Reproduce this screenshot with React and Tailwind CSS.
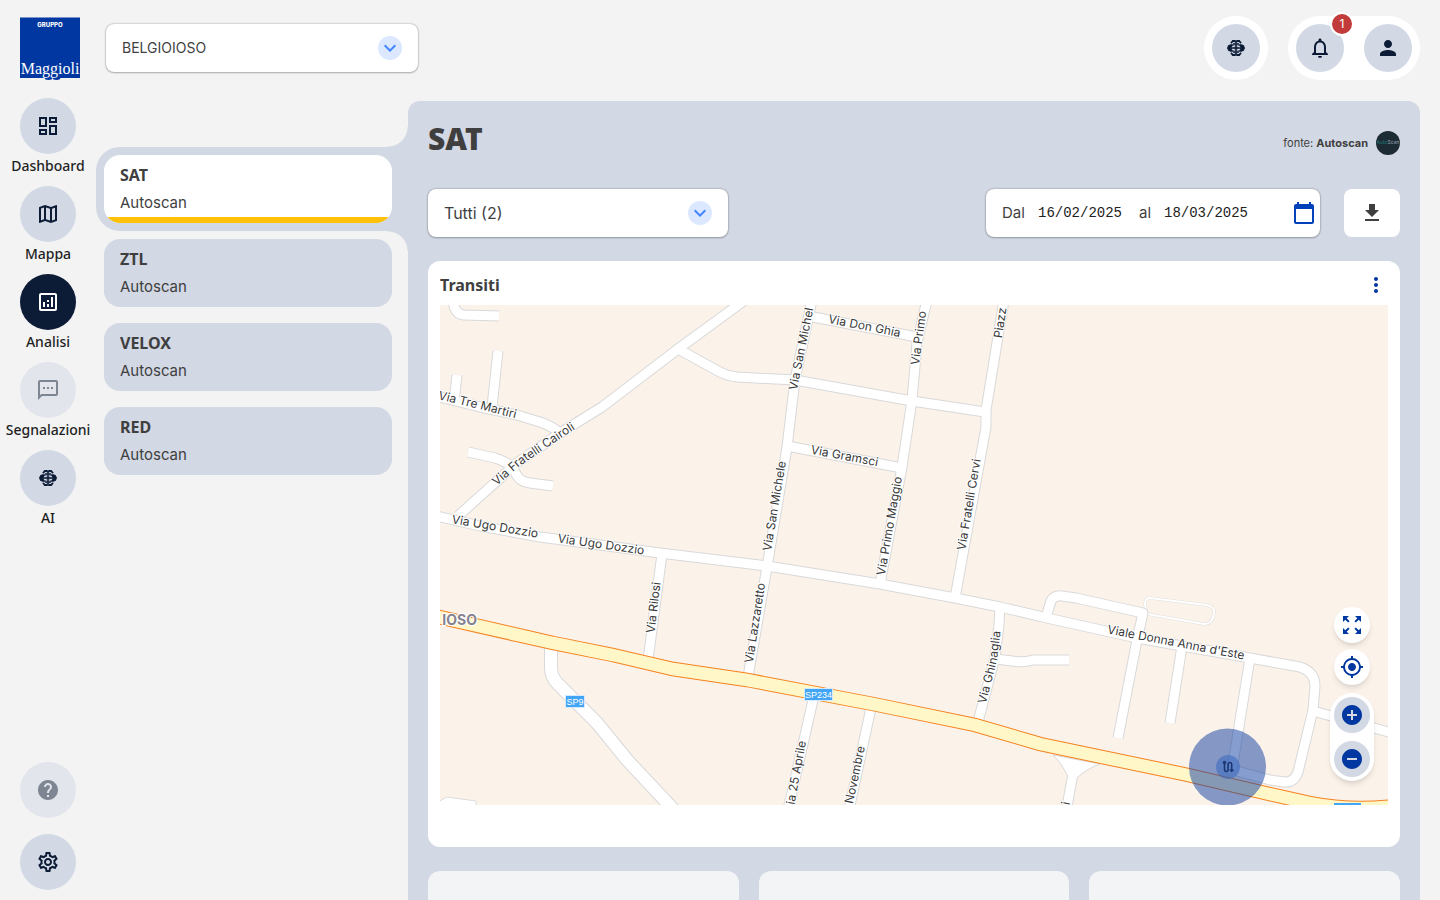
import {
    MdOutlineDashboard,
    MdOutlineMap,
    MdOutlineAnalytics,
    MdOutlineSms,
    MdHelp,
    MdOutlineSettings,
    MdNotificationsNone,
    MdPerson,
    MdFileDownload,
    MdCalendarToday,
    MdMoreVert,
    MdZoomOutMap,
    MdMyLocation,
    MdAddCircle,
    MdRemoveCircle,
    MdExpandMore,
} from "react-icons/md";

const BrainIcon = ({ className }) => (
    <svg viewBox="0 0 24 24" className={className} fill="none" stroke="currentColor" strokeWidth="1.800" aria-hidden="true">
        <path d="M11.600 5H8.800L7 7.200M12.400 5h2.800L17 7.200M11.600 19H8.800L7 16.800M12.400 19h2.800l1.800-2.200" />
        <path d="M3 12l1.200-2.800L6.500 8.200h2.300L10.300 9.500H8.800L7.500 11.500h1.800L11 12.300H9.300L7.500 13l1.300 1.500h1.500L8.800 15.800H6.500l-2.300-1z" fill="currentColor" stroke="none" />
        <path d="M21 12l-1.200-2.800-2.300-1h-2.300l-1.500 1.300h1.500l1.300 2h-1.800L13 12.300h1.700l1.800.7-1.300 1.500h-1.500l1.500 1.300h2.300l2.300-1z" fill="currentColor" stroke="none" />
        <path d="M11.300 4.500v15M12.700 4.500v15" strokeWidth="1" />
        <path d="M8.500 12h7" strokeWidth="1.500" />
        <path d="M9 8h2.500M12.500 8H15M9 16h2.500M12.500 16H15" strokeWidth="1.300" />
    </svg>
);

const MENU = [
    { label: "Dashboard", icon: MdOutlineDashboard },
    { label: "Mappa", icon: MdOutlineMap },
    { label: "Analisi", icon: MdOutlineAnalytics, active: true },
    { label: "Segnalazioni", icon: MdOutlineSms, disabled: true },
    { label: "AI", icon: BrainIcon },
];

const SECTIONS = [
    { title: "SAT", source: "Autoscan", active: true },
    { title: "ZTL", source: "Autoscan" },
    { title: "VELOX", source: "Autoscan" },
    { title: "RED", source: "Autoscan" },
];

const ROADS = [
    "M745 300L678 349L602 407L560 433L517 463L458 516",
    "M678 349L718 371Q727 376 737 377L795 380L912 401L985 412",
    "M436 396L480 407L517 415L543 423Q551 426 559 432",
    "M457 375L454 402",
    "M498 351L492 407",
    "M468 452L495 458Q512 463 516 474Q520 482 530 483L553 486",
    "M453 300Q454 314 464 315L499 316",
    "M436 516L480 526L540 537L660 553L767 566L880 584L955 598L1000 607L1047 618L1137 638L1182 646L1250 658L1300 667Q1315 672 1315 686L1313 710L1298 772Q1294 783 1284 782L1270 780L1237 771",
    "M812 300L795 380L787 447L767 567L748 677",
    "M813 317L917 337",
    "M927 300L917 343L912 400L902 467L880 584",
    "M787 446L902 468",
    "M1004 300L986 410L986 427L955 598",
    "M662 554L648 660",
    "M1000 607L999 625L995 657L978 722",
    "M996 659L1012 661Q1023 663 1033 660L1069 660",
    "M1046 617L1051 601Q1054 595 1062 596L1076 598L1143 613L1137 640L1118 738",
    "M1182 646L1170 723",
    "M1250 658L1232 770",
    "M1313 711L1392 733",
    "M813 700L788 810",
    "M871 708L849 810",
    "M1074 768L1066 812",
];

const SP9 = "M551 644L551 668Q551 677 558 684L597 723L628 761L674 810";
const SP234 = "M430 615L553 643L613 655L673 669L747 680L873 704L975 725L1040 744L1188 775L1265 793L1310 803Q1350 811 1395 806";

const LABELS = [
    { text: "Via Tre Martiri", d: "M425 392L480 405L530 418", at: "mid" },
    { text: "Via Fratelli Cairoli", d: "M479 496L517 463L560 434L590 415", at: "mid" },
    { text: "Via Ugo Dozzio", d: "M439 517L551 536", at: "mid" },
    { text: "Via Ugo Dozzio", d: "M541 536L661 553", at: "mid" },
    { text: "Via San Michel", d: "M793 390L814 285", at: "start" },
    { text: "Via San Michele", d: "M765 563L784 449", at: "mid" },
    { text: "Via Don Ghia", d: "M814 316L915 336", at: "mid" },
    { text: "Via Primo", d: "M915 365L930 255", at: "start" },
    { text: "Piazz", d: "M998 338L1008 270", at: "start" },
    { text: "Via Gramsci", d: "M797 447L892 465", at: "mid" },
    { text: "Via Primo Maggio", d: "M879 586L900 466", at: "mid" },
    { text: "Via Fratelli Cervi", d: "M959 563L979 446", at: "mid" },
    { text: "Via Rilosi", d: "M649 645L658 570", at: "mid" },
    { text: "Via Lazzaretto", d: "M747 674L763 572", at: "mid" },
    { text: "Via Ghinaglia", d: "M979 715L993 660L998 619", at: "mid" },
    { text: "Viale Donna Anna d'Este", d: "M1085 625L1267 660", at: "mid" },
    { text: "ia 25 Aprile", d: "M784 840L802 741", at: "end" },
    { text: "Novembre", d: "M835 870L861 746", at: "end" },
    { text: "i", d: "M1053 870L1066 802", at: "end" },
];

const ANCHOR = { start: "start", mid: "middle", end: "end" };
const OFFSET = { start: "0%", mid: "50%", end: "100%" };

const SideButton = ({ label, icon: Icon, active, disabled, hideLabel }) => (
    <button type="button" disabled={disabled} aria-label={label} className="flex w-full flex-col items-center">
        <span
            className={
                active
                    ? "flex size-14 items-center justify-center rounded-full bg-[#0c1b36] text-white"
                    : disabled
                        ? "flex size-14 items-center justify-center rounded-full bg-[#d2d8e4] text-[#0c1b36] opacity-50"
                        : "flex size-14 items-center justify-center rounded-full bg-[#d2d8e4] text-[#0c1b36]"
            }
        >
            <Icon className="size-6" />
        </span>
        {!hideLabel && <span className="text-sm leading-6 font-medium text-[#1f1f1f]">{label}</span>}
    </button>
);

const Sidebar = () => (
    <aside className="flex w-24 shrink-0 flex-col pb-2.5">
        <a href="#" className="mx-5 mt-4 flex h-16 flex-col">
            <svg viewBox="0 0 60 64" className="h-16 w-15" role="img" aria-label="Gruppo Maggioli">
                <rect y="1.500" width="60" height="60.500" fill="#0037a0" />
                <text x="30" y="11" textAnchor="middle" fontSize="6" fontWeight="800" fill="#fff" fontFamily="Inter, sans-serif">GRUPPO</text>
                <ellipse cx="28.500" cy="61.500" rx="4" ry="2.500" fill="#0037a0" />
                <ellipse cx="36.500" cy="61.500" rx="4" ry="2.500" fill="#0037a0" />
                <text x="30" y="58" textAnchor="middle" fontSize="16" fill="#fff" fontFamily="'Liberation Serif', serif">Maggioli</text>
            </svg>
        </a>
        <nav className="mt-4.5 flex flex-col gap-2">
            {MENU.map((item) => (
                <SideButton key={item.label} {...item} />
            ))}
        </nav>
        <div className="mt-auto flex flex-col gap-4">
            <SideButton label="Aiuto" icon={MdHelp} disabled hideLabel />
            <SideButton label="Impostazioni" icon={MdOutlineSettings} hideLabel />
        </div>
    </aside>
);

const SelectBox = ({ label, value, className }) => (
    <div className={`relative ${className}`}>
        <select
            aria-label={label}
            defaultValue={value}
            className="h-12 w-full appearance-none rounded-lg bg-white px-4 font-[Inter,sans-serif] text-[#3f3f3f] shadow-[0_1px_2px_rgba(0,0,0,0.2),0_0_2px_rgba(0,0,0,0.4)]"
        >
            <option>{value}</option>
        </select>
        <span className="pointer-events-none absolute top-3 right-4 flex size-6 items-center justify-center rounded-full bg-[#dbe8ff] text-[#4285ff]">
            <MdExpandMore className="size-6" />
        </span>
    </div>
);

const Header = () => (
    <header className="flex items-center justify-between pt-4 pr-5 pb-[21px] pl-2.5">
        <SelectBox label="Comune" value="BELGIOIOSO" className="w-78 text-sm" />
        <div className="flex gap-5">
            <div className="rounded-full bg-white p-2">
                <button type="button" aria-label="AI" className="flex size-12 items-center justify-center rounded-full bg-[#d2d8e4] text-[#0c1b36]">
                    <BrainIcon className="size-6" />
                </button>
            </div>
            <div className="flex gap-5 rounded-full bg-white p-2">
                <button type="button" aria-label="Notifiche" className="relative flex size-12 items-center justify-center rounded-full bg-[#d2d8e4] text-[#0c1b36]">
                    <MdNotificationsNone className="size-6" />
                    <span className="absolute -top-3 -right-2.5 flex size-6 items-center justify-center rounded-full border-2 border-white bg-[#c23b3b] font-[Inter,sans-serif] text-xs text-white">
                        1
                    </span>
                </button>
                <button type="button" aria-label="Profilo" className="flex size-12 items-center justify-center rounded-full bg-[#d2d8e4] text-[#0c1b36]">
                    <MdPerson className="size-6" />
                </button>
            </div>
        </div>
    </header>
);

const SectionNav = () => (
    <ul className="w-78 shrink-0 pt-[46px]">
        {SECTIONS.map((s) => (
            <li key={s.title} className={s.active ? "relative rounded-l-3xl bg-[#d2d8e4] py-2 pr-4 pl-2" : "py-2 pr-4 pl-2"}>
                {s.active && (
                    <>
                        <span className="absolute right-0 bottom-full size-5 bg-[radial-gradient(circle_at_top_left,transparent_19px,#d2d8e4_20px)]" />
                        <span className="absolute top-full right-0 size-5 bg-[radial-gradient(circle_at_bottom_left,transparent_19px,#d2d8e4_20px)]" />
                    </>
                )}
                <button
                    type="button"
                    className={
                        s.active
                            ? "relative flex w-full flex-col gap-1 overflow-hidden rounded-2xl bg-white px-4 py-2 text-left text-[#3f3f3f]"
                            : "flex w-full flex-col gap-1 rounded-2xl bg-[#d2d8e4] px-4 py-2 text-left text-[#3f3f3f]"
                    }
                >
                    <span className="text-base leading-6 font-bold">{s.title}</span>
                    <span className="font-[Inter,sans-serif] text-[15px] leading-6">{s.source}</span>
                    {s.active && <span className="absolute inset-x-0 bottom-0 h-1.5 bg-[#ffc107]" />}
                </button>
            </li>
        ))}
    </ul>
);

const StreetMap = () => (
    <svg viewBox="440 305 948 500" preserveAspectRatio="xMidYMid slice" className="block h-full w-full bg-[#fbf2ea]">
        <path d="M436 803L447 797L476 801V812H436z" fill="#fff" stroke="#dcdcdc" />
        <g fill="none" strokeLinejoin="round">
            <path d="M1150 598L1207 605Q1215 607 1214 613Q1213 624 1204 624L1147 614Q1142 598 1150 598z" stroke="#e2dfdc" strokeWidth="3" />
            <path d="M1150 598L1207 605Q1215 607 1214 613Q1213 624 1204 624L1147 614Q1142 598 1150 598z" stroke="#fff" strokeWidth="2" />
            {ROADS.map((d) => (
                <path key={d} d={d} stroke="#d9d9d9" strokeWidth="11" />
            ))}
            <path d={SP9} stroke="#d9d9d9" strokeWidth="14" />
        </g>
        <path d="M1053 755Q1061 762 1068 777L1077 778Q1086 769 1100 764z" fill="#fff" stroke="#d9d9d9" />
        <g fill="none" stroke="#fff" strokeLinejoin="round">
            {ROADS.map((d) => (
                <path key={d} d={d} strokeWidth="9" />
            ))}
            <path d={SP9} strokeWidth="12" />
        </g>
        <path d={SP234} fill="none" stroke="#f58220" strokeWidth="14.500" />
        <path d={SP234} fill="none" stroke="#fff7c8" strokeWidth="12.500" />

        <g fontFamily="Inter, 'Liberation Sans', sans-serif" fontSize="12" fill="#3a3a3a" stroke="#fff" strokeWidth="2" strokeLinejoin="round" paintOrder="stroke">
            {LABELS.map((l, i) => (
                <g key={i}>
                    <path id={`street-${i}`} d={l.d} fill="none" stroke="none" />
                    <text dy="4" textAnchor={ANCHOR[l.at]}>
                        <textPath href={`#street-${i}`} startOffset={OFFSET[l.at]}>{l.text}</textPath>
                    </text>
                </g>
            ))}
            <text x="477" y="625" textAnchor="end" fontSize="14" fontWeight="700" fill="#85818f">IOSO</text>
        </g>

        <g fontFamily="'Liberation Sans', Arial, sans-serif" fontSize="9" fill="#fff" textAnchor="middle">
            <rect x="565.500" y="695.500" width="19" height="12" fill="#42a5f5" stroke="#d5eaff" />
            <text x="575" y="705">SP9</text>
            <rect x="804.500" y="688.500" width="28" height="12" fill="#42a5f5" stroke="#d5eaff" />
            <text x="818.500" y="698">SP234</text>
            <rect x="1334" y="803" width="27" height="12" fill="#42a5f5" />
        </g>

        <circle cx="1227.500" cy="767" r="38.500" fill="#0d3ca0" fillOpacity="0.5" />
        <circle cx="1228" cy="767" r="12" fill="#2f64bf" fillOpacity="0.5" />
        <g fill="none" stroke="#1a3570" strokeWidth="1.500">
            <path d="M1224.500 763.500v6q0 2 1.800 2t1.800-2v-5q0-2 1.800-2t1.800 2v6" />
            <circle cx="1224.500" cy="762.500" r="1" />
            <path d="M1229.900 769.500l1.800 1.800 1.800-1.800" />
        </g>
    </svg>
);

const MapControls = () => (
    <div className="absolute right-3.5 bottom-6 flex flex-col items-center gap-1.5 text-[#0037a0]">
        <button type="button" aria-label="Schermo intero" className="flex size-9 items-center justify-center rounded-full bg-white shadow-md">
            <MdZoomOutMap className="size-6" />
        </button>
        <button type="button" aria-label="Posizione" className="flex size-9 items-center justify-center rounded-full bg-white shadow-md">
            <MdMyLocation className="size-6" />
        </button>
        <div className="mt-0.5 flex flex-col gap-2 rounded-full bg-white p-1 shadow-md">
            <button type="button" aria-label="Ingrandisci" className="flex size-9 items-center justify-center rounded-full bg-[#d2d8e4]">
                <MdAddCircle className="size-6" />
            </button>
            <button type="button" aria-label="Riduci" className="flex size-9 items-center justify-center rounded-full bg-[#d2d8e4]">
                <MdRemoveCircle className="size-6" />
            </button>
        </div>
    </div>
);

const DateRange = () => (
    <div className="flex h-12 w-[334px] items-center rounded-lg bg-white pr-1 pl-4 text-[#3f3f3f] shadow-[0_1px_2px_rgba(0,0,0,0.2),0_0_2px_rgba(0,0,0,0.4)]">
        <label htmlFor="date-from" className="w-9 font-[Inter,sans-serif] text-[15px]">Dal</label>
        <input id="date-from" type="text" defaultValue="16/02/2025" className="w-[101px] font-['Liberation_Mono',monospace] text-sm text-[#222]" />
        <label htmlFor="date-to" className="w-[25px] font-[Inter,sans-serif] text-[15px]">al</label>
        <input id="date-to" type="text" defaultValue="18/03/2025" className="w-24 font-['Liberation_Mono',monospace] text-sm text-[#222]" />
        <button type="button" aria-label="Calendario" className="ml-auto text-[#0040b8]">
            <MdCalendarToday className="size-6" />
        </button>
    </div>
);

const Content = () => (
    <main className="mr-5 min-w-0 flex-1 overflow-hidden rounded-t-xl bg-[#d2d8e4] p-5">
        <div className="mb-6 flex h-11 items-center justify-between">
            <h1 className="self-start text-[30px] leading-9 font-black text-[#3f3f3f]">SAT</h1>
            <div className="flex items-center gap-2">
                <p className="font-[Inter,sans-serif] text-[11px] text-[#3f3f3f]">
                    fonte: <strong className="font-bold">Autoscan</strong>
                </p>
                <span className="flex size-6 items-center justify-center rounded-full bg-[#1d2b35] font-[Inter,sans-serif] text-[5px] text-[#9aa5ad]">
                    <span className="text-[#1f7a78]">Auto</span>Scan
                </span>
            </div>
        </div>

        <div className="flex items-center gap-6">
            <SelectBox label="Dispositivi" value="Tutti (2)" className="w-75 text-base" />
            <div className="ml-auto">
                <DateRange />
            </div>
            <button type="button" aria-label="Scarica" className="flex h-12 w-14 items-center justify-center rounded-lg bg-white text-[#3f3f3f]">
                <MdFileDownload className="size-6" />
            </button>
        </div>

        <section className="mt-6 rounded-xl bg-white px-3 pt-3 pb-[42px]">
            <div className="flex h-6 items-center justify-between">
                <h2 className="text-base font-bold text-[#3f3f3f]">Transiti</h2>
                <button type="button" aria-label="Altro" className="text-[#0037a0]">
                    <MdMoreVert className="size-6" />
                </button>
            </div>
            <div className="relative mt-2 h-[500px] overflow-hidden">
                <StreetMap />
                <MapControls />
            </div>
        </section>

        <div className="mt-6 grid grid-cols-3 gap-5">
            <div className="h-40 rounded-xl bg-[#f3f4f6]" />
            <div className="h-40 rounded-xl bg-[#f3f4f6]" />
            <div className="h-40 rounded-xl bg-[#f3f4f6]" />
        </div>
    </main>
);

const App = () => {
    return (
        <div className="flex h-screen overflow-hidden bg-[#f3f3f3] font-['Noto_Sans',sans-serif]">
            <Sidebar />
            <div className="flex min-w-0 flex-1 flex-col">
                <Header />
                <div className="flex min-h-0 flex-1">
                    <SectionNav />
                    <Content />
                </div>
            </div>
        </div>
    );
};

export default App;
